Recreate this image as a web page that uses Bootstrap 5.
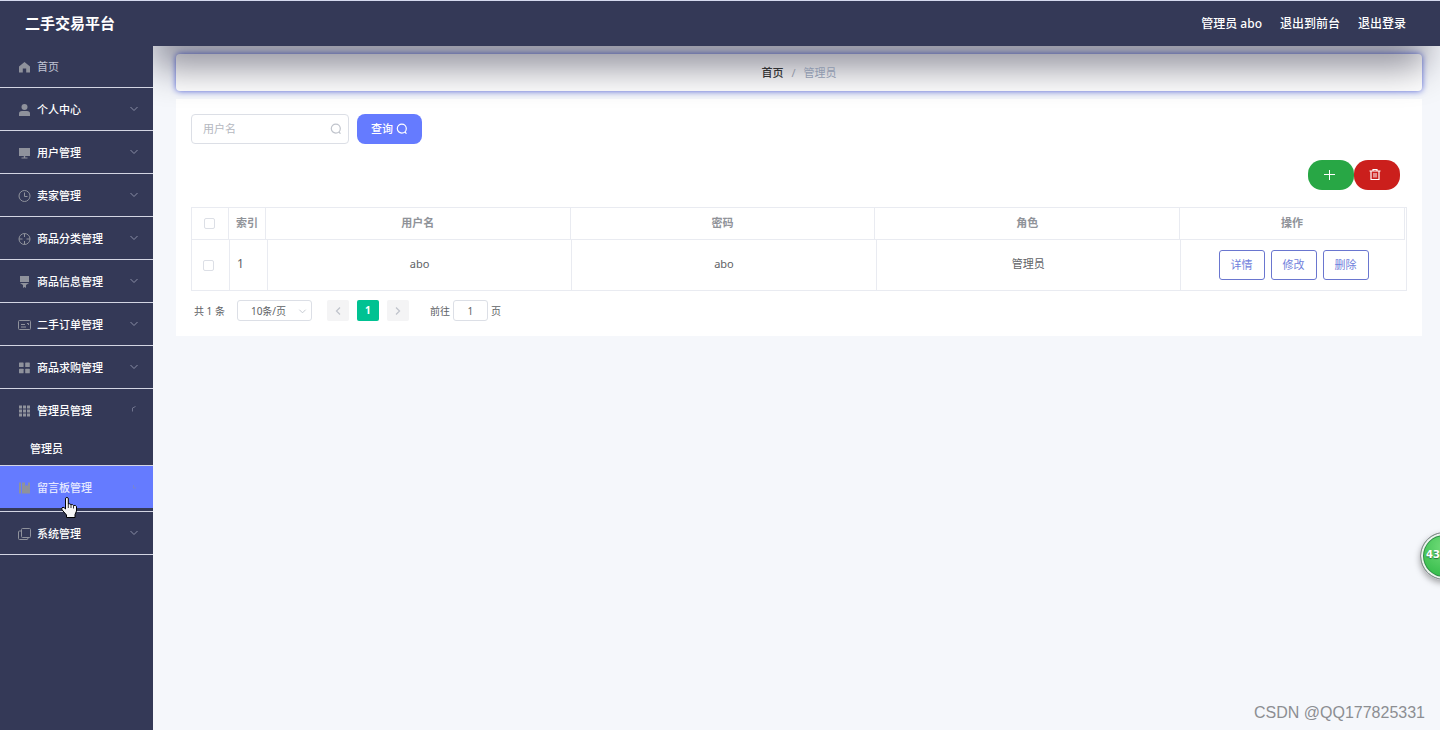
<!DOCTYPE html>
<html lang="zh-CN">
<head>
<meta charset="utf-8">
<meta name="viewport" content="width=device-width, initial-scale=1">
<title>二手交易平台</title>
<link href="https://cdn.jsdelivr.net/npm/bootstrap@5.3.0/dist/css/bootstrap.min.css" rel="stylesheet">
<style>
  :root { --navy: #343957; --accent: #657bff; --line: #e9ebf1; }
  body { font-family: "Noto Sans", "Noto Sans CJK SC", sans-serif; font-size: 11px; line-height: 16px; color: #606266; background: #f5f7fb; }
  a { text-decoration: none; color: inherit; }
  svg { display: block; flex: none; }
  .topbar { height: 46px; background: var(--navy); border-top: 1px solid #d5d9ee; color: #fff; padding: 0 34px 0 25px; font-size: 12px; }
  .brand-title { font-size: 15px; line-height: 22px; font-weight: 700; margin: 0; padding-bottom: 2px; }
  .top-links { gap: 18px; font-weight: 500; }
  .sidebar { width: 153px; background: var(--navy); color: #fff; font-weight: 500; }
  .menu-row { height: 43px; border-bottom: 1px solid #d3d5e3; padding: 2px 14px 0 18px; gap: 6px; }
  .menu-row.first { height: 42px; padding-top: 0; color: #c0c4d4; font-weight: 400; }
  .menu-row.opened { border-bottom: 0; padding-top: 0; }
  .menu-row.hovered { height: 42px; background: var(--accent); border-bottom: 0; color: #e4e8ff; }
  .hover-group { padding-bottom: 3px; border-bottom: 1px solid #d3d5e3; }
  .menu-row svg { color: #8f929c; }
  .menu-row .arrow { margin-left: auto; color: #8a8ea6; margin-bottom: 3px; }
  .sub-row { height: 34px; border-bottom: 1px solid #d3d5e3; padding-left: 30px; }
  .content { padding: 8px 18px 40px 23px; overflow: hidden; }
  .content::before { content: ""; position: absolute; z-index: 2; top: -46px; left: 0; right: 15px; height: 46px; box-shadow: 0 21px 37px rgba(0,0,28,.46); pointer-events: none; }
  .crumbs { height: 37px; background: #fff; border-radius: 4px; box-shadow: 0 0 6px #5668df; --bs-breadcrumb-item-padding-x: 6px; --bs-breadcrumb-font-size: 11px; }
  .crumbs a { color: #303133; font-weight: 500; }
  .crumbs .breadcrumb { position: relative; z-index: 3; }
  .crumbs .active { color: #8f99ae; }
  .crumbs .breadcrumb-item + .breadcrumb-item::before { color: #8f94a2; }
  .panel { background: #fff; padding: 15px; }
  .search-box { width: 158px; height: 30px; border: 1px solid #dcdfe6; border-radius: 4px; padding: 0 6px 0 11px; }
  .search-box input { font-size: 11px; border: 0; outline: 0; padding: 0; min-width: 0; width: 100%; color: #606266; }
  .search-box input::placeholder { color: #b5b8c0; }
  .search-box svg { color: #c0c4cc; }
  .btn-query { height: 30px; width: 65px; padding: 0; gap: 3px; border: 0; border-radius: 8px; background: var(--accent); color: #fff; font-size: 11px; font-weight: 500; }
  .tools { padding-right: 7px; margin-bottom: 17px; }
  .btn-round { width: 46px; height: 30px; padding: 0 4px 0 0; border: 0; border-radius: 14px; color: #fff; }
  .btn-add { background: #28a745; }
  .btn-del { background: #cb1f1c; }
  .grid-box { border: 1px solid var(--line); }
  .grid-box table { table-layout: fixed; width: 100%; border-collapse: separate; border-spacing: 0; }
  .grid-box .head-wrap { padding-right: 1px; }
  .grid-box th, .grid-box td { text-align: center; padding: 0 0 2px; border-right: 1px solid var(--line); }
  .grid-box th { height: 32px; border-bottom: 1px solid var(--line); color: #909399; font-weight: 600; }
  .grid-box td { height: 50px; }
  .grid-box td:last-child { border-right: 0; padding-bottom: 0; }
  .grid-box td.idx { text-align: left; padding-left: 7px; font-size: 12px; }
  .grid-box .w-op { width: 225px; }
  .grid-box thead .w-s { width: 37px; }
  .grid-box tbody .w-s { width: 38px; }
  .grid-box .w-s:first-child { padding-right: 2px; }
  .grid-box td.w-s:first-child { padding-right: 4px; }
  .form-check-input.tick { width: 11px; height: 11px; margin: 0; border: 1px solid #dcdfe6; border-radius: 2px; vertical-align: middle; }
  .row-acts { gap: 6px; }
  .btn-op { width: 46px; height: 30px; padding: 0; font-size: 11px; border: 1px solid #6a76cf; border-radius: 3px; color: #6f80dc; background: #fff; }
  .pager { margin-top: 9px; padding-left: 3px; font-size: 10px; line-height: 14px; }
  .pager .size { width: 75px; height: 21px; margin-left: 12px; border: 1px solid #dcdfe6; border-radius: 3px; }
  .pager select { appearance: none; width: 100%; height: 19px; border: 0; background: none; padding: 0 0 0 13px; font-size: 10px; color: #606266; }
  .pager .size svg { position: absolute; right: 4px; top: 6px; color: #c0c4cc; pointer-events: none; }
  .pager .pg { width: 22px; height: 21px; padding: 0; border: 0; border-radius: 2px; background: #f4f4f5; color: #c0c4cc; font-size: 10px; }
  .pager .pg.now { background: #00c292; color: #fff; font-weight: 700; }
  .pager .pg-set { gap: 8px; margin: 0 21px 0 15px; }
  .pager .jump { width: 35px; height: 21px; margin: 0 3px; padding: 0; text-align: center; border: 1px solid #dcdfe6; border-radius: 3px; color: #606266; font-size: 10px; }
  .bubble { right: -28px; top: 532px; width: 48px; height: 48px; border-radius: 50%; border: 1px solid #8d8794; background: radial-gradient(circle at 50% 30%, #72dc7a, #37bd4c 75%); box-shadow: inset 0 0 0 2px #eef3ef, inset 0 0 0 3px #2f8e48, 0 3px 6px rgba(0,0,0,.35); color: #fff; font: 700 10px/44px "DejaVu Sans", sans-serif; padding-left: 5px; text-shadow: 0 1px 1px #26733a; }
  .bubble-clip { z-index: 5; top: 0; right: 0; bottom: 0; width: 60px; overflow: hidden; pointer-events: none; }
  .watermark { z-index: 5; right: 15px; bottom: 7px; color: #8c8e92; font: 16px/20px "Liberation Sans", sans-serif; }
  .pointer { z-index: 6; left: 60px; top: 30px; }
</style>
</head>
<body>
<svg class="d-none" xmlns="http://www.w3.org/2000/svg">
  <symbol id="i-down" viewBox="0 0 10 10"><path d="M1.5 3 5 6.5 8.5 3" fill="none" stroke="currentColor"/></symbol>
  <symbol id="i-search" viewBox="0 0 12 12"><circle cx="5.8" cy="5.6" r="4.5" fill="none" stroke="currentColor" stroke-width="1.2"/><path d="M8.8 9 10.5 10.7" stroke="currentColor" stroke-width="1.2"/></symbol>
</svg>
<div class="min-vh-100 d-flex flex-column position-relative">
  <header class="topbar d-flex align-items-center justify-content-between">
    <h1 class="brand-title">二手交易平台</h1>
    <nav class="top-links d-flex">
      <span>管理员 abo</span>
      <a href="#">退出到前台</a>
      <a href="#">退出登录</a>
    </nav>
  </header>
  <div class="d-flex flex-grow-1">
    <nav class="sidebar flex-shrink-0">
      <a href="#" class="menu-row first d-flex align-items-center"><svg width="13" height="12" viewBox="0 0 13 12" fill="currentColor"><path d="M6.5 1 12 5.5V11.5H8.2V7.5H4.8V11.5H1V5.5z"/></svg>首页</a>
      <a href="#" class="menu-row d-flex align-items-center"><svg width="13" height="12" viewBox="0 0 13 12" fill="currentColor"><circle cx="6.5" cy="3" r="3"/><path d="M1 12V9.5Q1 7.3 4 7H9Q12 7.3 12 9.5V12z"/></svg>个人中心<svg class="arrow" width="10" height="10"><use href="#i-down"/></svg></a>
      <a href="#" class="menu-row d-flex align-items-center"><svg width="13" height="12" viewBox="0 0 13 12" fill="currentColor"><path d="M1 1H12V9H7.2V10.5H9.5V11.5H3.5V10.5H5.8V9H1z"/></svg>用户管理<svg class="arrow" width="10" height="10"><use href="#i-down"/></svg></a>
      <a href="#" class="menu-row d-flex align-items-center"><svg width="13" height="12" viewBox="0 0 13 12" fill="none" stroke="currentColor"><circle cx="6.5" cy="6" r="5.5"/><path d="M6.5 2.5V6.5H9.5"/></svg>卖家管理<svg class="arrow" width="10" height="10"><use href="#i-down"/></svg></a>
      <a href="#" class="menu-row d-flex align-items-center"><svg width="13" height="12" viewBox="0 0 13 12" fill="none" stroke="currentColor"><circle cx="6.5" cy="6" r="5.5"/><path d="M6.5.5V4M6.5 8V11.5M1 6H4.5M8.5 6H12"/></svg>商品分类管理<svg class="arrow" width="10" height="10"><use href="#i-down"/></svg></a>
      <a href="#" class="menu-row d-flex align-items-center"><svg width="13" height="12" viewBox="0 0 13 12" fill="currentColor"><path d="M2 0H11V6H2zM2 7H11L8 9V12L6.5 11 5 12V9z"/></svg>商品信息管理<svg class="arrow" width="10" height="10"><use href="#i-down"/></svg></a>
      <a href="#" class="menu-row d-flex align-items-center"><svg width="13" height="12" viewBox="0 0 13 12" fill="none" stroke="currentColor"><rect x=".5" y="1.5" width="12" height="9" rx="1"/><path d="M3 5.5H7M3 8H8M9 4.5H10.5V6"/></svg>二手订单管理<svg class="arrow" width="10" height="10"><use href="#i-down"/></svg></a>
      <a href="#" class="menu-row d-flex align-items-center"><svg width="13" height="12" viewBox="0 0 13 12" fill="currentColor"><rect x="1" y=".5" width="4.6" height="4.6" rx=".6"/><rect x="7.2" y=".5" width="4.6" height="4.6" rx=".6"/><rect x="1" y="6.7" width="4.6" height="4.6" rx=".6"/><rect x="7.2" y="6.7" width="4.6" height="4.6" rx=".6"/></svg>商品求购管理<svg class="arrow" width="10" height="10"><use href="#i-down"/></svg></a>
      <a href="#" class="menu-row opened d-flex align-items-center"><svg width="13" height="12" viewBox="0 0 13 12" fill="currentColor"><path d="M1 .5H4V3.5H1zM5 .5H8V3.5H5zM9 .5H12V3.5H9zM1 4.5H4V7.5H1zM5 4.5H8V7.5H5zM9 4.5H12V7.5H9zM1 8.5H4V11.5H1zM5 8.5H8V11.5H5zM9 8.5H12V11.5H9z"/></svg>管理员管理<svg class="arrow" width="10" height="10" viewBox="0 0 10 10" fill="none" stroke="currentColor" opacity=".7"><path d="M3.5 7.5V4L6.5 2.5"/></svg></a>
      <a href="#" class="sub-row d-flex align-items-center">管理员</a>
      <div class="hover-group position-relative">
        <a href="#" class="menu-row hovered d-flex align-items-center"><svg width="13" height="12" viewBox="0 0 13 12" fill="currentColor"><path d="M1 .5H3V11.5H1zM4 .5H7V4L8.5 3 10 4V.5H12V11.5H4z"/></svg>留言板管理<svg class="arrow" width="10" height="10" viewBox="0 0 10 10" fill="none" stroke="currentColor" opacity=".5"><path d="M4.5 3V6H7"/></svg></a>
        <svg class="pointer position-absolute" width="18" height="23" viewBox="0 0 18 23"><path d="M5.5 13V2.2Q7 .5 8.3 2.2V8Q10 7.2 11 8.7 12.5 8 13.5 9.5 15.5 8.8 16.5 10.5V15L15 18.5V21.5H6.5V19L2 13.8Q1 11.5 3 11.2Q4.3 11.5 5.5 13z" fill="#f5f5f5" stroke="#000"/><path d="M8.3 8V12M11 8.7V12M13.5 9.5V12.5" stroke="#333"/></svg>
      </div>
      <a href="#" class="menu-row d-flex align-items-center"><svg width="13" height="12" viewBox="0 0 13 12" fill="none" stroke="currentColor"><rect x="3.5" y=".5" width="9" height="9" rx="1"/><path d="M3 3H1.5Q.5 3 .5 4V10.5Q.5 11.5 1.5 11.5H9Q10 11.5 10 10"/></svg>系统管理<svg class="arrow" width="10" height="10"><use href="#i-down"/></svg></a>
    </nav>
    <main class="content flex-grow-1 position-relative">
      <nav class="crumbs d-flex align-items-center justify-content-center mb-2" aria-label="breadcrumb">
        <ol class="breadcrumb mb-0">
          <li class="breadcrumb-item"><a href="#">首页</a></li>
          <li class="breadcrumb-item active">管理员</li>
        </ol>
      </nav>
      <section class="panel">
        <form class="d-flex gap-2 mb-3">
          <div class="search-box d-flex align-items-center"><input type="text" placeholder="用户名" aria-label="用户名"><svg width="12" height="12"><use href="#i-search"/></svg></div>
          <button type="button" class="btn btn-query d-flex align-items-center justify-content-center">查询<svg width="12" height="12"><use href="#i-search"/></svg></button>
        </form>
        <div class="tools d-flex justify-content-end">
          <button type="button" class="btn btn-round btn-add d-flex align-items-center justify-content-center" aria-label="新增"><svg width="12" height="12" viewBox="0 0 12 12" stroke="currentColor"><path d="M6.5 1V11M1 5.5H12"/></svg></button>
          <button type="button" class="btn btn-round btn-del d-flex align-items-center justify-content-center" aria-label="删除"><svg width="12" height="12" viewBox="0 0 12 12" fill="none" stroke="currentColor"><path d="M.5 2H11.5M4 2V.5H8V2M2 2V10.5H10V2" stroke-width="1.2"/><path d="M5 4V8.5M7 4V8.5"/></svg></button>
        </div>
        <div class="grid-box">
          <div class="head-wrap">
            <table>
              <thead><tr>
                <th class="w-s"><input type="checkbox" class="form-check-input tick" aria-label="全选"></th>
                <th class="w-s">索引</th><th>用户名</th><th>密码</th><th>角色</th><th class="w-op">操作</th>
              </tr></thead>
            </table>
          </div>
          <table>
            <tbody><tr>
              <td class="w-s"><input type="checkbox" class="form-check-input tick" aria-label="选择 abo"></td>
              <td class="w-s idx">1</td><td>abo</td><td>abo</td><td>管理员</td>
              <td class="w-op"><div class="row-acts d-flex justify-content-center"><button type="button" class="btn btn-op">详情</button><button type="button" class="btn btn-op">修改</button><button type="button" class="btn btn-op">删除</button></div></td>
            </tr></tbody>
          </table>
        </div>
        <div class="pager d-flex align-items-center">
          <span>共 1 条</span>
          <div class="size position-relative"><select aria-label="每页条数"><option>10条/页</option><option>20条/页</option></select><svg width="9" height="9"><use href="#i-down"/></svg></div>
          <div class="pg-set d-flex">
            <button type="button" class="btn pg d-flex align-items-center justify-content-center" aria-label="上一页"><svg width="8" height="10" viewBox="0 0 8 10" fill="none" stroke="currentColor" stroke-width="1.3"><path d="M6 1.5 2.5 5 6 8.5"/></svg></button>
            <button type="button" class="btn pg now">1</button>
            <button type="button" class="btn pg d-flex align-items-center justify-content-center" aria-label="下一页"><svg width="8" height="10" viewBox="0 0 8 10" fill="none" stroke="currentColor" stroke-width="1.3"><path d="M2 1.5 5.5 5 2 8.5"/></svg></button>
          </div>
          <label for="jump">前往</label><input id="jump" class="jump" type="text" value="1"><span>页</span>
        </div>
      </section>
    </main>
  </div>
  <div class="bubble-clip position-absolute"><div class="bubble position-absolute">43</div></div>
  <div class="watermark position-absolute">CSDN @QQ177825331</div>
</div>
<script src="https://cdn.jsdelivr.net/npm/bootstrap@5.3.0/dist/js/bootstrap.bundle.min.js"></script>
</body>
</html>
